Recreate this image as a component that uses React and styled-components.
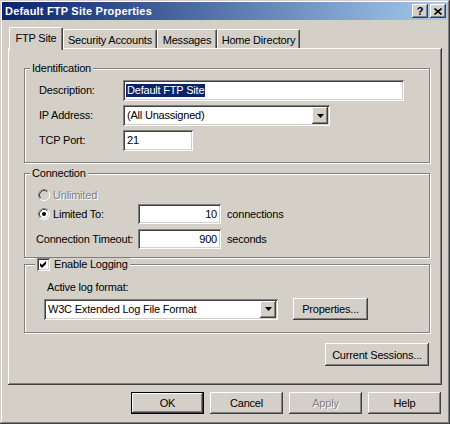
import React from "react";
import styled, { createGlobalStyle } from "styled-components";

const face = "#d4d0c8";

const GlobalStyle = createGlobalStyle`
  html, body {
    margin: 0;
    padding: 0;
    background: ${face};
  }
  body {
    font-family: "Liberation Sans", Arial, sans-serif;
    font-size: 11px;
    letter-spacing: -0.2px;
    color: #000;
  }
  * {
    box-sizing: border-box;
  }
`;

const raised = `
  box-shadow: inset -1px -1px #404040, inset 1px 1px #fff,
    inset -2px -2px #808080, inset 2px 2px ${face};
`;

const sunken = `
  box-shadow: inset 1px 1px #808080, inset -1px -1px #fff,
    inset 2px 2px #404040, inset -2px -2px ${face};
`;

const Window = styled.div`
  width: 450px;
  height: 424px;
  padding: 2px;
  background: ${face};
  box-shadow: inset -1px -1px #404040, inset 1px 1px ${face},
    inset -2px -2px #808080, inset 2px 2px #fff;
  display: flex;
  flex-direction: column;
`;

const TitleBar = styled.div`
  height: 18px;
  background: linear-gradient(90deg, #0a246a, #a6caf0);
  display: flex;
  align-items: center;
  padding: 0 2px 0 3px;
  color: #fff;
  font-weight: bold;
`;

const TitleText = styled.span`
  flex: 1;
  letter-spacing: 0.2px;
`;

const CaptionButton = styled.div`
  width: 16px;
  height: 14px;
  margin-left: ${props => (props.$gap ? 2 : 0)}px;
  background: ${face};
  ${raised}
  display: flex;
  align-items: center;
  justify-content: center;
  color: #000;
  font-weight: bold;
  font-size: 11px;
  line-height: 1;
`;

const Body = styled.div`
  flex: 1;
  display: flex;
  flex-direction: column;
  padding: 7px 6px 0 6px;
`;

const TabRow = styled.div`
  display: flex;
  align-items: flex-end;
  height: 21px;
  padding-left: 1px;
`;

const Tab = styled.div`
  width: ${props => props.$w}px;
  height: ${props => (props.$active ? 23 : 19)}px;
  margin-bottom: ${props => (props.$active ? -2 : 0)}px;
  position: relative;
  z-index: ${props => (props.$active ? 1 : 0)};
  background: ${face};
  border-top: 1px solid #fff;
  border-left: 1px solid #fff;
  border-right: 1px solid #404040;
  border-radius: 2px 2px 0 0;
  box-shadow: inset -1px 0 #808080;
  display: flex;
  justify-content: center;
  padding-top: 4px;
  line-height: 13px;
  white-space: nowrap;
`;

const Panel = styled.div`
  height: 337px;
  display: flex;
  flex-direction: column;
  padding: 20px 12px 0 16px;
  box-shadow: inset -1px -1px #404040, inset 1px 1px #fff,
    inset -2px -2px #808080, inset 2px 2px ${face};
`;

const Group = styled.div`
  position: relative;
  margin-top: ${props => props.$mt || 0}px;
  border: 1px solid #808080;
  box-shadow: inset 1px 1px #fff, 1px 1px #fff;
  padding: ${props => props.$pad};
`;

const Legend = styled.div`
  position: absolute;
  top: -7px;
  left: ${props => props.$left || 5}px;
  padding: 0 2px;
  background: ${face};
  line-height: 13px;
  display: flex;
  align-items: center;
  gap: 4px;
`;

const FieldGrid = styled.div`
  display: grid;
  grid-template-columns: 84px auto;
  grid-auto-rows: 21px;
  row-gap: 4px;
  align-items: center;
`;

const Label = styled.span`
  line-height: 13px;
  color: ${props => (props.$disabled ? "#808080" : "#000")};
  text-shadow: ${props => (props.$disabled ? "1px 1px #fff" : "none")};
  white-space: nowrap;
`;

const Field = styled.div`
  width: ${props => props.$w}px;
  height: ${props => props.$h || 21}px;
  background: #fff;
  ${sunken}
  display: flex;
  align-items: center;
  justify-content: ${props => (props.$right ? "flex-end" : "flex-start")};
  padding: ${props => (props.$right ? "0 4px 0 3px" : "0 2px 0 3px")};
  line-height: 13px;
  white-space: nowrap;
`;

const FieldText = styled.span`
  flex: ${props => (props.$grow ? 1 : "none")};
  padding: 0 1px;
`;

const Selected = styled.span`
  background: #0a246a;
  color: #fff;
  padding: 0 1px;
`;

const DropButton = styled.div`
  width: 16px;
  height: calc(100% - 4px);
  background: ${face};
  ${raised}
  display: flex;
  align-items: center;
  justify-content: center;
`;

const OptionRow = styled.div`
  display: flex;
  align-items: center;
  height: ${props => props.$h}px;
  margin-bottom: ${props => props.$mb || 0}px;
`;

const OptionLabel = styled.div`
  width: 102px;
  display: flex;
  align-items: center;
  gap: 3px;
`;

const RadioBox = styled.svg`
  margin-left: 2px;
  flex: none;
`;

const Unit = styled.span`
  margin-left: 6px;
  line-height: 13px;
`;

const CheckBox = styled.span`
  width: 13px;
  height: 13px;
  background: #fff;
  ${sunken}
  display: flex;
  flex: none;
`;

const FormatLabel = styled.div`
  line-height: 13px;
  margin: 0 0 4px 3px;
`;

const FormatRow = styled.div`
  display: flex;
  align-items: center;
  height: 22px;
  gap: 15px;
`;

const Button = styled.button`
  width: ${props => props.$w}px;
  height: ${props => props.$h || 22}px;
  padding: 0;
  border: none;
  background: ${face};
  font: inherit;
  letter-spacing: inherit;
  color: ${props => (props.disabled ? "#808080" : "#000")};
  text-shadow: ${props => (props.disabled ? "1px 1px #fff" : "none")};
  ${props =>
    props.$default
      ? `box-shadow: inset 0 0 0 1px #000, inset -2px -2px #404040,
          inset 2px 2px #fff, inset -3px -3px #808080;`
      : raised}
`;

const SessionsButton = styled(Button)`
  align-self: flex-end;
  margin: 10px 1px 0 0;
`;

const Footer = styled.div`
  display: flex;
  justify-content: flex-end;
  gap: 6px;
  margin-top: 7px;
  padding-right: 1px;
`;

const Radio = ({ checked, disabled }) => (
  <RadioBox width="12" height="12" viewBox="0 0 12 12">
    <circle cx="6" cy="6" r="5" fill={disabled ? face : "#fff"} />
    <path d="M2.11 9.89 A5.5 5.5 0 0 1 9.89 2.11" fill="none" stroke="#808080" />
    <path d="M9.89 2.11 A5.5 5.5 0 0 1 2.11 9.89" fill="none" stroke="#fff" />
    <path d="M2.82 9.18 A4.5 4.5 0 0 1 9.18 2.82" fill="none" stroke="#404040" />
    <path d="M9.18 2.82 A4.5 4.5 0 0 1 2.82 9.18" fill="none" stroke={face} />
    {checked && <circle cx="6" cy="6" r="2" fill="#000" />}
  </RadioBox>
);

const Arrow = () => (
  <svg width="7" height="4" viewBox="0 0 7 4">
    <polygon points="0,0 7,0 3.5,4" fill="#000" />
  </svg>
);

const Combo = ({ w, children }) => (
  <Field $w={w}>
    <FieldText $grow>{children}</FieldText>
    <DropButton>
      <Arrow />
    </DropButton>
  </Field>
);

export default function App() {
  return (
    <>
      <GlobalStyle />
      <Window>
        <TitleBar>
          <TitleText>Default FTP Site Properties</TitleText>
          <CaptionButton>?</CaptionButton>
          <CaptionButton $gap>
            <svg width="8" height="7" viewBox="0 0 8 7">
              <path d="M0.5 0.5 L7.5 6.5 M7.5 0.5 L0.5 6.5" stroke="#000" strokeWidth="1.6" />
            </svg>
          </CaptionButton>
        </TitleBar>

        <Body>
          <TabRow>
            <Tab $w={54} $active>FTP Site</Tab>
            <Tab $w={94}>Security Accounts</Tab>
            <Tab $w={60}>Messages</Tab>
            <Tab $w={83}>Home Directory</Tab>
          </TabRow>

          <Panel>
            <Group $pad="11px 0 11px 14px">
              <Legend>Identification</Legend>
              <FieldGrid>
                <Label>Description:</Label>
                <Field $w={281}>
                  <Selected>Default FTP Site</Selected>
                </Field>
                <Label>IP Address:</Label>
                <Combo w={207}>(All Unassigned)</Combo>
                <Label>TCP Port:</Label>
                <Field $w={70}>
                  <FieldText>21</FieldText>
                </Field>
              </FieldGrid>
            </Group>

            <Group $mt={10} $pad="13px 0 8px 11px">
              <Legend>Connection</Legend>
              <OptionRow $h={16} $mb={1}>
                <OptionLabel>
                  <Radio disabled />
                  <Label $disabled>Unlimited</Label>
                </OptionLabel>
              </OptionRow>
              <OptionRow $h={20} $mb={5}>
                <OptionLabel>
                  <Radio checked />
                  <Label>Limited To:</Label>
                </OptionLabel>
                <Field $w={83} $h={20} $right>10</Field>
                <Unit>connections</Unit>
              </OptionRow>
              <OptionRow $h={20}>
                <OptionLabel>
                  <Label>Connection Timeout:</Label>
                </OptionLabel>
                <Field $w={83} $h={20} $right>900</Field>
                <Unit>seconds</Unit>
              </OptionRow>
            </Group>

            <Group $mt={6} $pad="16px 0 12px 19px">
              <Legend $left={10}>
                <CheckBox>
                  <svg width="13" height="13" viewBox="0 0 13 13">
                    <polygon points="3,5 5,7 9,3 9,6 5,10 3,8" fill="#000" />
                  </svg>
                </CheckBox>
                Enable Logging
              </Legend>
              <FormatLabel>Active log format:</FormatLabel>
              <FormatRow>
                <Combo w={234}>W3C Extended Log File Format</Combo>
                <Button $w={75}>Properties...</Button>
              </FormatRow>
            </Group>

            <SessionsButton $w={104} $h={23}>
              Current Sessions...
            </SessionsButton>
          </Panel>

          <Footer>
            <Button $w={73} $default>OK</Button>
            <Button $w={73}>Cancel</Button>
            <Button $w={73} disabled>Apply</Button>
            <Button $w={73}>Help</Button>
          </Footer>
        </Body>
      </Window>
    </>
  );
}
